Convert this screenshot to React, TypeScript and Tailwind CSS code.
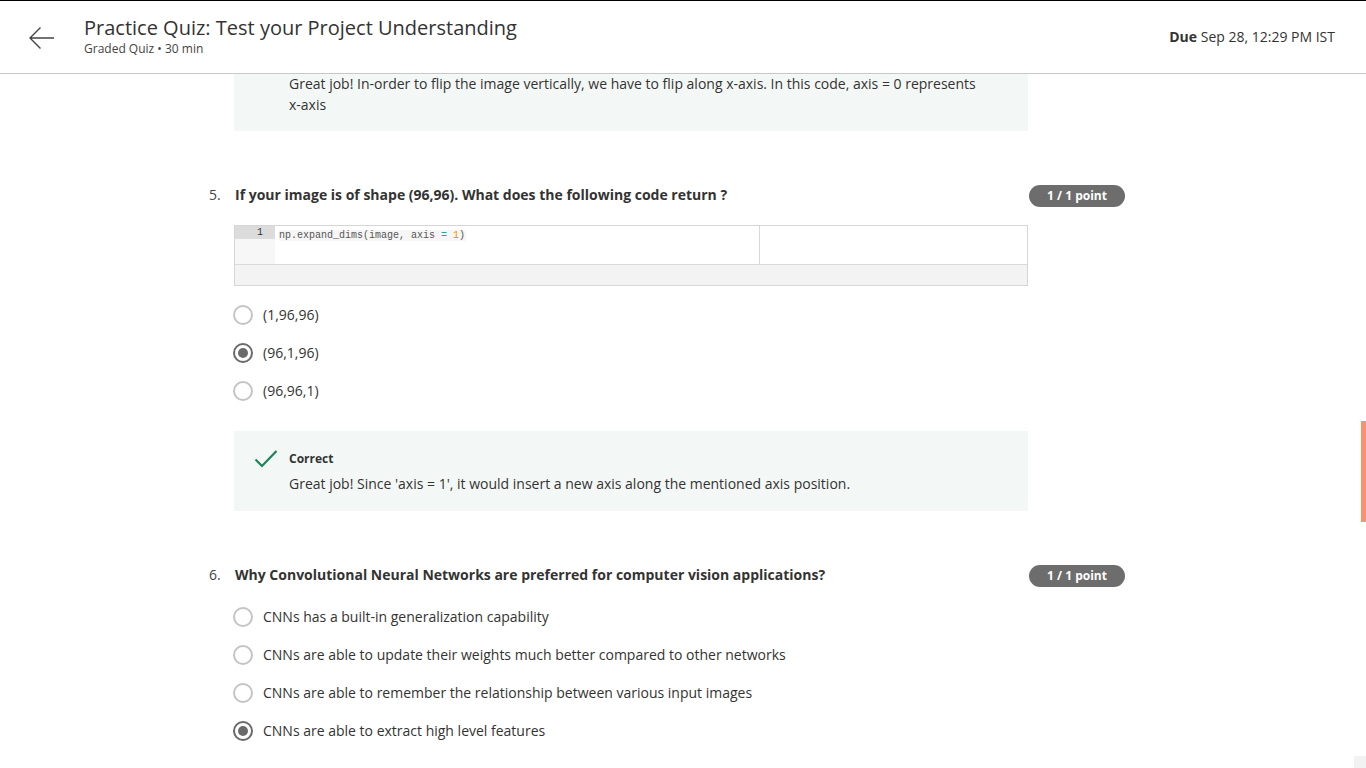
import React from 'react';

const FONT = { fontFamily: '"Open Sans", "Liberation Sans", sans-serif' };
const MONO = { fontFamily: '"Liberation Mono", "DejaVu Sans Mono", monospace' };

const Radio: React.FC<{ checked?: boolean }> = ({ checked }) => (
  <span
    className={`w-5 h-5 rounded-full border-2 flex items-center justify-center shrink-0 ${checked ? 'border-[#6a6a6a]' : 'border-[#c4c4c4]'}`}
  >
    {checked && <span className="w-[10px] h-[10px] rounded-full bg-[#6a6a6a]" />}
  </span>
);

const Options: React.FC<{ items: string[]; selected: number }> = ({ items, selected }) => (
  <div className="flex flex-col gap-[18px] ml-[-1px]">
    {items.map((t, i) => (
      <div key={t} className="flex items-center gap-[10px] h-5">
        <Radio checked={i === selected} />
        <span className="text-[14px] leading-5 text-[#333]">{t}</span>
      </div>
    ))}
  </div>
);

const QuestionHead: React.FC<{ n: number; text: string }> = ({ n, text }) => (
  <div className="flex items-start h-[22px]">
    <span className="w-[26px] text-[14px] leading-[20px] text-[#444]">{n}.</span>
    <span className="flex-1 text-[14px] leading-[20px] font-bold text-[#333]">{text}</span>
    <span className="w-[96px] h-[22px] rounded-full bg-[#6d6d6d] text-white text-[12px] font-bold flex items-center justify-center">
      1 / 1 point
    </span>
  </div>
);

const Check = () => (
  <svg width="24" height="20" viewBox="0 0 24 20" fill="none">
    <path d="M1.5 10.5 L8 17 L22.5 2" stroke="#1f8354" strokeWidth="2.2" />
  </svg>
);

export default function App() {
  return (
    <div className="w-[1366px] h-[768px] bg-white overflow-hidden relative" style={FONT}>
      <header className="h-[74px] border-t border-black border-b border-b-[#c8c8c8] flex items-center pl-[28px] pr-[31px]">
        <svg width="28" height="24" viewBox="0 0 28 24" fill="none" className="mr-[28px] mt-[1px]">
          <path d="M26 12 H2 M12.5 1.5 L2 12 L12.5 22.5" stroke="#444" strokeWidth="1.4" />
        </svg>
        <div className="flex-1 flex flex-col mt-[-2px]">
          <h1 className="text-[20px] leading-[26px] text-[#333]">Practice Quiz: Test your Project Understanding</h1>
          <span className="text-[12px] leading-[16px] text-[#444]">Graded Quiz • 30 min</span>
        </div>
        <div className="text-[14px] text-[#333] mb-[1px]">
          <span className="font-bold">Due</span> Sep 28, 12:29 PM IST
        </div>
      </header>

      <main className="pl-[209px] w-[1125px]">
        <div className="ml-[25px] w-[794px] h-[57px] bg-[#f3f8f6] pl-[55px] pr-[40px] flex flex-col">
          <p className="text-[14px] leading-[21px] text-[#333] mt-[-1px]">
            Great job! In-order to flip the image vertically, we have to flip along x-axis. In this code, axis = 0 represents x-axis
          </p>
        </div>

        <section className="mt-[54px]">
          <QuestionHead n={5} text="If your image is of shape (96,96). What does the following code return ?" />
          <div className="ml-[25px] w-[794px] mt-[18px] border border-[#d6d6d6] h-[61px] flex flex-col">
            <div className="h-[39px] bg-white flex border-b border-[#dadada]">
              <div className="w-[40px] bg-[#f7f7f7] flex flex-col">
                <div className="h-[13px] bg-[#dcdcdc] text-[10px] leading-[13px] text-[#333] text-right pr-[12px]" style={MONO}>1</div>
              </div>
              <div className="w-[485px] border-r border-[#d3d9de] pl-[4px] leading-[13px]">
                <span className="text-[10px] leading-[13px] text-[#555] bg-[#f6f6f6] pr-[1px]" style={MONO}>
                  np.expand_dims(image, axis <span className="text-[#2aa0a0]">=</span> <span className="text-[#f08a24]">1</span>)
                </span>
              </div>
              <div className="flex-1" />
            </div>
            <div className="flex-1 bg-[#f3f3f3]" />
          </div>
          <div className="ml-[25px] mt-[19px]">
            <Options items={['(1,96,96)', '(96,1,96)', '(96,96,1)']} selected={1} />
          </div>
          <div className="ml-[25px] w-[794px] mt-[30px] h-[80px] bg-[#f3f8f6] flex pt-[18px] pl-[20px]">
            <Check />
            <div className="ml-[11px] flex flex-col">
              <span className="text-[12px] font-bold text-[#333] leading-[18px] mt-[1px]">Correct</span>
              <span className="text-[14px] text-[#333] leading-[20px] mt-[6px]">
                Great job! Since 'axis = 1', it would insert a new axis along the mentioned axis position.
              </span>
            </div>
          </div>
        </section>

        <section className="mt-[54px]">
          <QuestionHead n={6} text="Why Convolutional Neural Networks are preferred for computer vision applications?" />
          <div className="ml-[25px] mt-[20px]">
            <Options
              items={[
                'CNNs has a built-in generalization capability',
                'CNNs are able to update their weights much better compared to other networks',
                'CNNs are able to remember the relationship between various input images',
                'CNNs are able to extract high level features',
              ]}
              selected={3}
            />
          </div>
        </section>
      </main>

      <div className="absolute right-0 top-[421px] w-[5px] h-[101px] bg-[#f4956d]" />
      <div className="absolute right-0 bottom-0 w-[12px] h-[12px] bg-[#f2f2f2]" />
    </div>
  );
}
